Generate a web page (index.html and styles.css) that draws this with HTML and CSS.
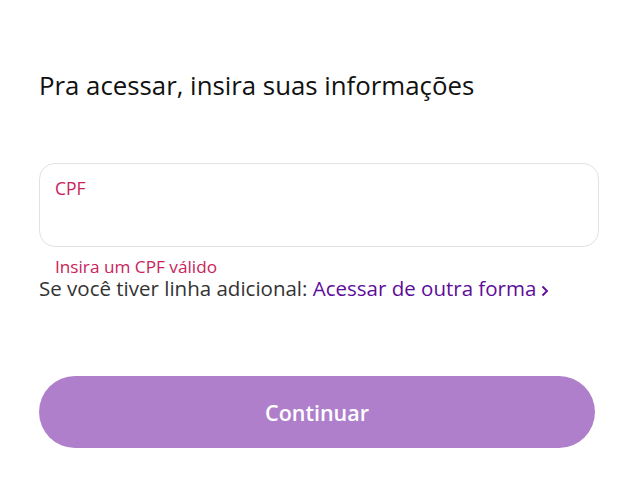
FILE: index.html
```html
<!DOCTYPE html>
<html lang="pt-BR">
<head>
    <meta charset="UTF-8">
    <meta name="viewport" content="width=device-width, initial-scale=1.0">
    <title>Acessar</title>
    <link rel="stylesheet" href="styles.css">
</head>
<body>
    <div class="login">
        <h1 class="login-title">Pra acessar, insira suas informações</h1>

        <!-- Campo CPF -->
        <label class="field">
            <span class="field-label">CPF</span>
            <input class="field-input" type="text" inputmode="numeric">
        </label>
        <span class="field-error">Insira um CPF válido</span>

        <p class="alt-access">
            Se você tiver linha adicional:
            <a class="alt-link" href="#">Acessar de outra forma<svg class="chevron" width="8" height="12" viewBox="0 0 8 12"><path d="M1.5 1.5 L6 6 L1.5 10.5" fill="none" stroke="currentColor" stroke-width="1.9"/></svg></a>
        </p>

        <button class="submit" disabled>Continuar</button>
    </div>
</body>
</html>
```

FILE: styles.css
```css
body {
    font-family: "Open Sans", Arial, sans-serif;
    margin: 0;
    background: #fff;
    color: #111;
}

.login {
    display: flex;
    flex-direction: column;
    padding: 68px 39px 0 39px;
}

.login-title {
    font-size: 25.8px;
    line-height: 34px;
    font-weight: 400;
    margin: 0 0 61px 0;
    color: #111;
}

.field {
    display: flex;
    flex-direction: column;
    height: 84px;
    box-sizing: border-box;
    width: 560px;
    border: 1px solid #e2e2e2;
    border-radius: 16px;
    padding: 12px 15px;
}

.field-label {
    font-size: 17.5px;
    line-height: 24px;
    color: #c8245a;
}

.field-input {
    border: none;
    outline: none;
    font: inherit;
    font-size: 18px;
    padding: 0;
    background: transparent;
}

.field-error {
    font-size: 17.2px;
    line-height: 17px;
    color: #c8245a;
    margin: 11px 0 0 16px;
}

.alt-access {
    font-size: 20.5px;
    line-height: 22px;
    color: #333;
    margin: 2px 0 0 0;
}

.alt-link {
    color: #5e0d99;
    text-decoration: none;
}

.chevron {
    margin-left: 5px;
    vertical-align: -1px;
}

.submit {
    margin-top: 77px;
    width: 556px;
    height: 72px;
    border: none;
    border-radius: 36px;
    background: #b07fcb;
    color: #fff;
    font-family: inherit;
    font-size: 21.5px;
    font-weight: 600;
}
```
